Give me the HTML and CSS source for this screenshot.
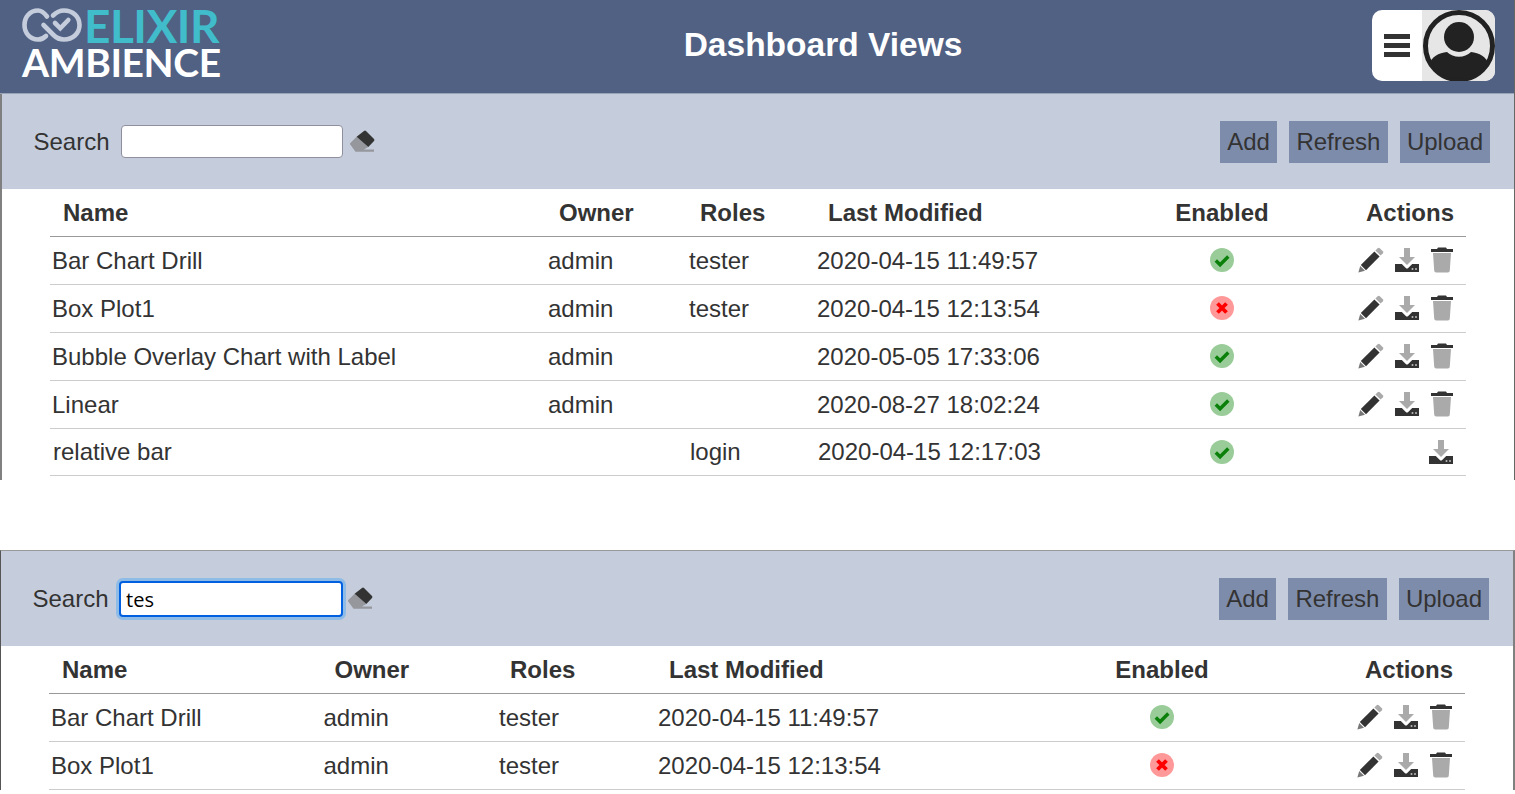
FILE: index.html
```html
<!DOCTYPE html>
<html lang="en">
<head>
<meta charset="utf-8">
<title>Dashboard Views</title>
<link rel="stylesheet" href="styles.css">
</head>
<body>
<svg class="defs" width="0" height="0" aria-hidden="true">
  <symbol id="i-pen" viewBox="0 0 26 26">
    <path fill="#aaa" d="M19.600 1.200a1.600 1.600 0 0 1 2.200 0l3 3a1.600 1.600 0 0 1 0 2.200l-2.200 2.200-5.200-5.200z"/>
    <path fill="#333" d="M16.400 4.400l5.200 5.200L8 23.200 2.800 18z"/>
    <path fill="#777" d="M2.200 19l4.800 4.800L.4 25.600z"/>
  </symbol>
  <symbol id="i-dl" viewBox="0 0 26 26">
    <path fill="#333" d="M1 17h6.800l4 4a1.700 1.700 0 0 0 2.400 0l4-4H25v8H1z"/>
    <path fill="#aaa" d="M10 1h6v9h5l-8 8-8-8h5z"/>
    <circle cx="18.500" cy="22" r="1" fill="#bbb"/><circle cx="22" cy="22" r="1" fill="#bbb"/>
  </symbol>
  <symbol id="i-trash" viewBox="0 0 24 26">
    <path fill="#333" d="M8 .5h8l1 1.500h6v3H1V2h6z"/>
    <path fill="#aaa" d="M3 6h18l-1.200 17.500a2 2 0 0 1-2 2H6.200a2 2 0 0 1-2-2z"/>
  </symbol>
  <symbol id="i-ok" viewBox="0 0 24 24">
    <circle cx="12" cy="12" r="12" fill="#99cc99"/>
    <path fill="none" stroke="#0a800a" stroke-width="3.400" d="M5.800 12.500l4.300 4.300 8.200-8.300"/>
  </symbol>
  <symbol id="i-no" viewBox="0 0 24 24">
    <circle cx="12" cy="12" r="12" fill="#ff9999"/>
    <path fill="none" stroke="#f00" stroke-width="3.800" d="M7.500 7.500l9 9M16.500 7.500l-9 9"/>
  </symbol>
  <symbol id="i-eraser" viewBox="0 0 25 22">
    <path fill="#95979c" d="M6.600 6.700L.6 12.800a1.500 1.500 0 0 0 0 2.200L5.500 21.800H24v-2.400H13.800l4.500-2.400z"/>
    <path fill="#333" d="M6.600 6.700L14 1a1.500 1.500 0 0 1 2 0l8 8a1.500 1.500 0 0 1 0 2l-5.700 6z"/>
  </symbol>
</svg>

<section class="shot shot-main">
  <header class="topbar">
    <div class="logo">
      <svg class="logo-mark" viewBox="0 0 60 34" aria-hidden="true">
        <g fill="none" stroke="#c5cddc" stroke-width="4.600" stroke-linecap="round">
          <path d="M25 8.500C22 4.500 19.500 2.500 16 2.500 8 2.500 2.500 9 2.500 17S8 31.500 16 31.500c3 0 5.500-1 8-3.500"/>
          <path d="M21.500 17l10 10c3 3 6.500 4.500 10.500 4.500 8.500 0 15.500-6 15.500-14.500S50.500 2.500 42 2.500c-4 0-7.500 1.500-11 5"/>
          <path d="M33 15l5.300 5.300 8-8.300"/>
        </g>
      </svg>
      <span class="logo-top">ELIXIR</span>
      <span class="logo-bottom">AMBIENCE</span>
    </div>
    <h1 class="title">Dashboard Views</h1>
    <div class="usermenu">
      <div class="burger"><i></i><i></i><i></i></div>
      <div class="avatar">
        <svg viewBox="0 0 72 72" aria-hidden="true">
          <defs><clipPath id="av-clip"><circle cx="36" cy="36" r="33"/></clipPath></defs>
          <circle cx="36" cy="36" r="33.500" fill="#e6e6e6" stroke="#222" stroke-width="5"/>
          <g clip-path="url(#av-clip)" fill="#222">
            <circle cx="36" cy="27" r="15"/>
            <path d="M6 72V56C8 46 16 43 24 42A17.500 17.500 0 0 0 48 42C56 43 64 46 66 56V72Z"/>
          </g>
        </svg>
      </div>
    </div>
  </header>
  <div class="toolbar">
    <label class="search-label" for="s1">Search</label>
    <input class="search" id="s1" type="text">
    <svg class="eraser"><use href="#i-eraser"/></svg>
    <div class="buttons">
      <button class="btn">Add</button><button class="btn btn-wide">Refresh</button><button class="btn">Upload</button>
    </div>
  </div>
  <table class="grid grid-main">
    <colgroup><col class="c1"><col class="c2"><col class="c3"><col class="c4"><col class="c5"><col class="c6"></colgroup>
    <thead><tr><th>Name</th><th>Owner</th><th>Roles</th><th>Last Modified</th><th class="center">Enabled</th><th class="right">Actions</th></tr></thead>
    <tbody>
      <tr><td>Bar Chart Drill</td><td>admin</td><td>tester</td><td>2020-04-15 11:49:57</td><td class="center"><svg class="status"><use href="#i-ok"/></svg></td><td class="actions"><svg class="a-pen"><use href="#i-pen"/></svg><svg class="a-dl"><use href="#i-dl"/></svg><svg class="a-trash"><use href="#i-trash"/></svg></td></tr>
      <tr><td>Box Plot1</td><td>admin</td><td>tester</td><td>2020-04-15 12:13:54</td><td class="center"><svg class="status"><use href="#i-no"/></svg></td><td class="actions"><svg class="a-pen"><use href="#i-pen"/></svg><svg class="a-dl"><use href="#i-dl"/></svg><svg class="a-trash"><use href="#i-trash"/></svg></td></tr>
      <tr><td>Bubble Overlay Chart with Label</td><td>admin</td><td></td><td>2020-05-05 17:33:06</td><td class="center"><svg class="status"><use href="#i-ok"/></svg></td><td class="actions"><svg class="a-pen"><use href="#i-pen"/></svg><svg class="a-dl"><use href="#i-dl"/></svg><svg class="a-trash"><use href="#i-trash"/></svg></td></tr>
      <tr><td>Linear</td><td>admin</td><td></td><td>2020-08-27 18:02:24</td><td class="center"><svg class="status"><use href="#i-ok"/></svg></td><td class="actions"><svg class="a-pen"><use href="#i-pen"/></svg><svg class="a-dl"><use href="#i-dl"/></svg><svg class="a-trash"><use href="#i-trash"/></svg></td></tr>
      <tr class="row-short"><td>relative bar</td><td></td><td>login</td><td>2020-04-15 12:17:03</td><td class="center"><svg class="status"><use href="#i-ok"/></svg></td><td class="actions"><svg class="a-dl"><use href="#i-dl"/></svg></td></tr>
    </tbody>
  </table>
</section>

<section class="shot shot-second">
  <div class="toolbar">
    <label class="search-label" for="s2">Search</label>
    <input class="search search-focus" id="s2" type="text" value="tes">
    <svg class="eraser eraser-near"><use href="#i-eraser"/></svg>
    <div class="buttons">
      <button class="btn">Add</button><button class="btn btn-wide">Refresh</button><button class="btn">Upload</button>
    </div>
  </div>
  <table class="grid grid-second">
    <colgroup><col class="d1"><col class="d2"><col class="d3"><col class="d4"><col class="d5"><col class="d6"></colgroup>
    <thead><tr><th>Name</th><th>Owner</th><th>Roles</th><th>Last Modified</th><th class="center">Enabled</th><th class="right">Actions</th></tr></thead>
    <tbody>
      <tr><td>Bar Chart Drill</td><td>admin</td><td>tester</td><td>2020-04-15 11:49:57</td><td class="center"><svg class="status"><use href="#i-ok"/></svg></td><td class="actions"><svg class="a-pen"><use href="#i-pen"/></svg><svg class="a-dl"><use href="#i-dl"/></svg><svg class="a-trash"><use href="#i-trash"/></svg></td></tr>
      <tr><td>Box Plot1</td><td>admin</td><td>tester</td><td>2020-04-15 12:13:54</td><td class="center"><svg class="status"><use href="#i-no"/></svg></td><td class="actions"><svg class="a-pen"><use href="#i-pen"/></svg><svg class="a-dl"><use href="#i-dl"/></svg><svg class="a-trash"><use href="#i-trash"/></svg></td></tr>
    </tbody>
  </table>
</section>
</body>
</html>
```

FILE: styles.css
```css
* { box-sizing: border-box; }
html, body { margin: 0; padding: 0; height: 794px; overflow: hidden; background: #fff; }
body { font-family: "Liberation Sans", Arial, sans-serif; font-size: 24px; color: #333; }
.defs { position: absolute; }

.shot-main { height: 480px; border-left: 2px solid #808080; border-right: 1px solid #666; }
.shot-second { margin-top: 70px; border-top: 1px solid #999; border-left: 1px solid #555; border-right: 2px solid #808080; }

.topbar { height: 94px; margin-left: -2px; background: #506184; border-bottom: 1px solid #99a3b8; display: flex; align-items: center; padding-left: 22px; padding-right: 19px; }
.logo { width: 200px; height: 80px; position: relative; font-family: "Lato", sans-serif; font-weight: 700; flex: none; margin-top: -13px; }
.logo-mark { position: absolute; left: 0; top: 8px; width: 60px; height: 34px; }
.logo-top { position: absolute; left: 62px; top: 9px; height: 34px; font-size: 46px; line-height: 34px; color: #41bccb; letter-spacing: -0.5px; }
.logo-bottom { position: absolute; left: 0; top: 48px; height: 29px; font-size: 39px; line-height: 29px; color: #fff; letter-spacing: -0.4px; }
.title { flex: 1; margin: -4px 0 0; text-align: center; font-size: 33.500px; font-weight: 700; color: #fff; padding-left: 52px; }
.usermenu { width: 123px; height: 71px; margin-top: -2px; border-radius: 10px; overflow: hidden; background: #fff; display: flex; flex: none; }
.burger { width: 50px; display: flex; flex-direction: column; justify-content: center; align-items: center; gap: 4px; }
.burger i { display: block; width: 26px; height: 5px; background: #333; }
.avatar { width: 73px; background: #e6e6e6; display: flex; align-items: center; justify-content: center; }
.avatar svg { width: 72px; height: 72px; }

.toolbar { height: 95px; background: #c5cddc; display: flex; align-items: center; padding-left: 31.500px; padding-right: 24px; }
.search-label { margin-right: 11.500px; }
.search { width: 222px; height: 33px; border: 1px solid #8f8f9d; border-radius: 4px; background: #fff; padding: 0 4px; font-family: "Open Sans", sans-serif; font-size: 20px; color: #000; outline: none; }
.search-focus { width: 224px; height: 36px; margin-left: -1px; border: 2px solid #0060df; box-shadow: 0 0 0 3px #8fbce6; padding: 2px 5px 0; }
.eraser { width: 25px; height: 22px; margin-left: 7px; margin-top: -2px; }
.eraser-near { margin-left: 5px; }
.buttons { margin-left: auto; display: flex; gap: 12px; }
.btn { height: 42px; padding: 0 7px; border: 0; background: #7e8cab; color: #333; font: inherit; }
.btn-wide { padding: 0 7.500px; }

.grid { width: 1416px; margin-left: 48px; border-collapse: collapse; table-layout: fixed; }
.grid th { height: 47px; padding: 2px 0 0 13px; text-align: left; font-weight: 700; border-bottom: 1px solid #999; }
.grid td { height: 48px; padding: 1px 0 0 2px; border-bottom: 1px solid #ccc; white-space: nowrap; }
.grid th.center, .grid td.center { text-align: center; padding: 0; }
.grid th.center { padding-top: 2px; }
.grid th.right { text-align: right; padding: 2px 12px 0 0; }
.grid td.actions { text-align: right; padding: 0 12px 0 0; font-size: 0; }
.status { width: 24px; height: 24px; vertical-align: middle; display: inline-block; margin-top: -3px; }
.actions svg { height: 26px; vertical-align: middle; margin-left: 10px; }
.a-pen { width: 26px; }
.a-dl { width: 26px; }
.a-trash { width: 24px; }
.grid .row-short td { height: 47px; padding-left: 3px; padding-top: 0; }
.grid .row-short td.center, .grid .row-short td.actions { padding: 0; }
.grid .row-short td.actions { padding-right: 12px; }
.c1 { width: 496px; } .c2 { width: 141px; } .c3 { width: 128px; } .c4 { width: 313px; } .c5 { width: 188px; } .c6 { width: 150px; }
.d1 { width: 272.500px; } .d2 { width: 175.500px; } .d3 { width: 159px; } .d4 { width: 370px; } .d5 { width: 272px; } .d6 { width: 167px; }
```
